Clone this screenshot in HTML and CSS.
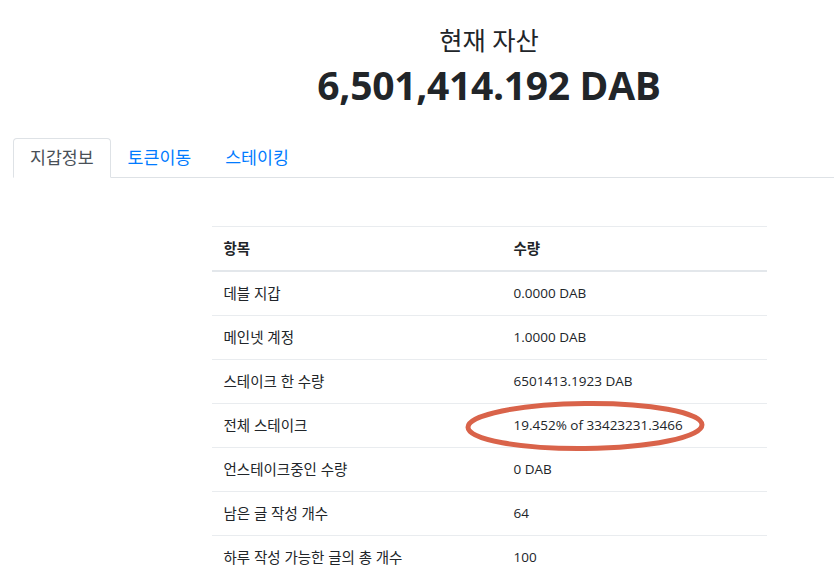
FILE: index.html
```html
<!DOCTYPE html>
<html lang="ko">
<head>
<meta charset="utf-8">
<link rel="stylesheet" href="styles.css">
</head>
<body>
<div class="hero">
  <h3 class="hero-label">현재 자산</h3>
  <h1 class="hero-value">6,501,414.192 DAB</h1>
</div>
<ul class="tabs">
  <li class="tab active">지갑정보</li>
  <li class="tab">토큰이동</li>
  <li class="tab">스테이킹</li>
</ul>
<div class="content">
  <table class="info">
    <thead>
      <tr><th class="c1"><span class="ko">항목</span></th><th><span class="ko">수량</span></th></tr>
    </thead>
    <tbody>
      <tr><td><span class="ko">데블 지갑</span></td><td>0.0000 DAB</td></tr>
      <tr><td><span class="ko">메인넷 계정</span></td><td>1.0000 DAB</td></tr>
      <tr><td><span class="ko">스테이크 한 수량</span></td><td>6501413.1923 DAB</td></tr>
      <tr><td><span class="ko">전체 스테이크</span></td><td><span class="marked">19.452% of 33423231.3466<svg class="circle" width="242" height="54" viewBox="0 0 242 54"><ellipse cx="121" cy="27" rx="117" ry="22.5" fill="none" stroke="#d9634a" stroke-width="5" transform="rotate(-0.6 121 27)"/></svg></span></td></tr>
      <tr><td><span class="ko">언스테이크중인 수량</span></td><td>0 DAB</td></tr>
      <tr><td><span class="ko">남은 글 작성 개수</span></td><td>64</td></tr>
      <tr><td><span class="ko">하루 작성 가능한 글의 총 개수</span></td><td>100</td></tr>
    </tbody>
  </table>
</div>
</body>
</html>
```
FILE: styles.css
```css
* { box-sizing: border-box; }
html, body { margin: 0; padding: 0; background: #fff; }
body {
  font-family: "Open Sans", "Noto Sans CJK KR", sans-serif;
  color: #212529;
  font-size: 16px;
  line-height: 1.5;
  overflow: hidden;
}
.hero {
  margin-left: 144px;
  width: 690px;
  text-align: center;
  padding-top: 22px;
}
.hero-label {
  margin: 0;
  font-size: 25.3px;
  font-weight: 400;
  line-height: 36px;
}
.hero-value {
  margin: 2px 0 0;
  font-size: 39px;
  font-weight: 700;
  line-height: 50px;
  letter-spacing: -0.3px;
}
.tabs {
  list-style: none;
  margin: 28px 0 0 13px;
  padding: 0;
  display: flex;
  border-bottom: 1px solid #dee2e6;
}
.tab {
  padding: 8px 16px;
  border: 1px solid transparent;
  border-top-left-radius: 4px;
  border-top-right-radius: 4px;
  margin-bottom: -1px;
  color: #007bff;
  font-size: 17.3px;
  line-height: 22px;
}
.tab.active {
  color: #495057;
  border-color: #dee2e6 #dee2e6 #fff;
  background: #fff;
}
.content {
  margin-left: 144px;
  width: 690px;
  padding-top: 48px;
}
.info {
  width: 555px;
  margin: 0 auto;
  border-collapse: collapse;
  font-size: 13.5px;
}
.info th, .info td {
  text-align: left;
  padding: 12px 12px;
  height: 43px;
  line-height: 19px;
  border-top: 1px solid #e9ecef;
  vertical-align: top;
}
.info .ko { font-size: 14.5px; line-height: 19px; display: inline-block; vertical-align: top; }
.info th { font-weight: 700; border-bottom: 2px solid #e3e7eb; }
.info .c1 { width: 290px; }
.marked { position: relative; display: inline-block; vertical-align: top; }
.circle { position: absolute; left: -50px; top: -17px; }
```
